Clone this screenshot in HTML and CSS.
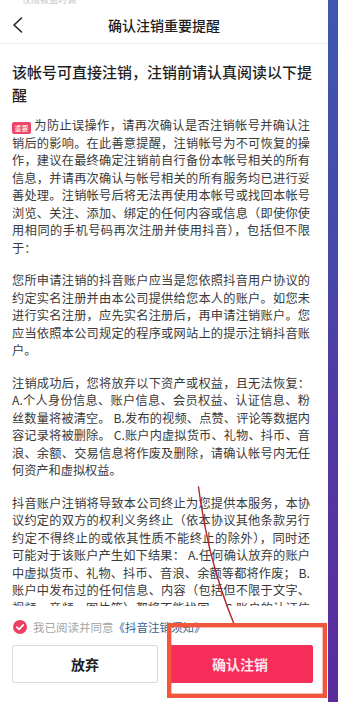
FILE: index.html
```html
<!DOCTYPE html>
<html lang="zh-CN">
<head>
<meta charset="utf-8">
<title>确认注销重要提醒</title>
<link rel="stylesheet" href="styles.css">
</head>
<body>
<div class="screen">
  <div class="app">
    <div class="status"><span class="status-text">仅限被盗时调</span></div>
    <header class="nav">
      <svg class="back" width="11" height="16" viewBox="0 0 11 16"><polyline points="9.5,1 2,8 9.5,15" fill="none" stroke="#222" stroke-width="1.6" stroke-linecap="round" stroke-linejoin="round"/></svg>
      <h1 class="title">确认注销重要提醒</h1>
      <span></span>
    </header>
    <main class="content">
      <h2 class="heading">该帐号可直接注销，注销前请认真阅读以下提醒</h2>
      <p class="para"><span class="badge">重要</span>为防止误操作，请再次确认是否注销帐号并确认注销后的影响。在此善意提醒，注销帐号为不可恢复的操作，建议在最终确定注销前自行备份本帐号相关的所有信息，并请再次确认与帐号相关的所有服务均已进行妥善处理。注销帐号后将无法再使用本帐号或找回本帐号浏览、关注、添加、绑定的任何内容或信息（即使你使用相同的手机号码再次注册并使用抖音），包括但不限于：</p>
      <p class="para">您所申请注销的抖音账户应当是您依照抖音用户协议的约定实名注册并由本公司提供给您本人的账户。如您未进行实名注册，应先实名注册后，再申请注销账户。您应当依照本公司规定的程序或网站上的提示注销抖音账户。</p>
      <p class="para">注销成功后，您将放弃以下资产或权益，且无法恢复：A.个人身份信息、账户信息、会员权益、认证信息、粉丝数量将被清空。 B.发布的视频、点赞、评论等数据内容记录将被删除。 C.账户内虚拟货币、礼物、抖币、音浪、余额、交易信息将作废及删除，请确认帐号内无任何资产和虚拟权益。</p>
      <p class="para">抖音账户注销将导致本公司终止为您提供本服务，本协议约定的双方的权利义务终止（依本协议其他条款另行约定不得终止的或依其性质不能终止的除外），同时还可能对于该账户产生如下结果： A.任何确认放弃的账户中虚拟货币、礼物、抖币、音浪、余额等都将作废； B.账户中发布过的任何信息、内容（包括但不限于文字、视频、音频、图片等）都将不能找回。 C.账户的认证信息将被清除。</p>
    </main>
    <footer class="footer">
      <div class="agree">
        <span class="check"><svg width="14" height="14" viewBox="0 0 14 14"><circle cx="7" cy="7" r="7" fill="#ec3f64"/><polyline points="3.8,7.2 6.1,9.4 10.3,4.9" fill="none" stroke="#fff" stroke-width="1.6" stroke-linecap="round" stroke-linejoin="round"/></svg></span>
        <span class="agree-text">我已阅读并同意</span><span class="link">《抖音注销须知》</span>
      </div>
      <div class="actions">
        <button class="btn btn-ghost">放弃</button>
        <button class="btn btn-primary">确认注销</button>
      </div>
    </footer>
  </div>
  <div class="edge"></div>
  <svg class="annot" width="338" height="702" viewBox="0 0 338 702">
    <path d="M198.5 487 Q203 520 210 550 Q220 590 234 624" fill="none" stroke="#b3262c" stroke-width="1.4" stroke-linecap="round"/>
    <rect x="169.2" y="625.2" width="155.6" height="70.6" fill="none" stroke="#f2573c" stroke-width="4.4"/>
  </svg>
</div>
</body>
</html>
```

FILE: styles.css
```css
* { box-sizing: border-box; }
html, body { margin: 0; padding: 0; background: #fff; }
body { font-family: "Noto Sans CJK SC", "Noto Sans", sans-serif; }

.screen {
  position: relative;
  width: 338px;
  height: 702px;
  overflow: hidden;
  display: flex;
}

.app {
  width: 328px;
  height: 702px;
  display: flex;
  flex-direction: column;
  background: #fff;
}

.edge {
  width: 10px;
  height: 702px;
  background: linear-gradient(to bottom, #3e57ad 0%, #4649aa 35%, #5238a6 60%, #5b2b9c 100%);
}

.status {
  height: 6px;
  overflow: hidden;
  padding-left: 22px;
}
.status-text {
  display: block;
  margin-top: -5px;
  font-size: 9px;
  line-height: 9px;
  color: #c6c6c6;
}

.nav {
  height: 38px;
  border-bottom: 1px solid #f0f0f0;
  display: grid;
  grid-template-columns: 40px 1fr 40px;
  align-items: center;
  padding: 0 12px;
}
.back { display: block; }
.title {
  margin: 0;
  text-align: center;
  font-size: 14px;
  font-weight: 500;
  color: #1c1c1c;
  line-height: 20px;
}

.content {
  flex: 1;
  overflow: hidden;
  padding: 0 12px;
}

.heading {
  margin: 16px 0 11px;
  font-size: 15px;
  line-height: 23px;
  font-weight: 500;
  color: #1f1f1f;
}

.para {
  margin: 0 6px 15px 0;
  font-size: 12.2px;
  line-height: 17.5px;
  color: #3a3a3a;
  text-align: justify;
}

.badge {
  display: inline-block;
  width: 19px;
  height: 12px;
  margin-right: 3px;
  border-radius: 2px;
  background: #ef4569;
  color: #fff;
  font-size: 7px;
  line-height: 12px;
  text-align: center;
  vertical-align: -1px;
}

.footer {
  background: #fff;
  padding: 13px 15px 19px 12px;
}

.agree {
  height: 16px;
  display: flex;
  align-items: center;
  padding-left: 1px;
}
.check { width: 14px; height: 14px; margin-right: 6px; }
.check svg { display: block; }
.agree-text {
  font-size: 11.5px;
  color: #a6a6a6;
}
.link {
  font-size: 11.5px;
  color: #38618f;
}

.actions {
  margin-top: 10px;
  display: grid;
  grid-template-columns: 1fr 1fr;
  gap: 9px;
}
.btn {
  height: 38px;
  border-radius: 2px;
  font-family: "Noto Sans CJK SC", "Noto Sans", sans-serif;
  font-size: 14px;
  font-weight: 600;
  padding: 0;
}
.btn-ghost {
  background: #fff;
  border: 1px solid #dadada;
  color: #222;
}
.btn-primary {
  background: #f72d5a;
  border: none;
  color: rgba(255, 255, 255, 0.9);
}

.annot {
  position: absolute;
  left: 0;
  top: 0;
  pointer-events: none;
}
```
